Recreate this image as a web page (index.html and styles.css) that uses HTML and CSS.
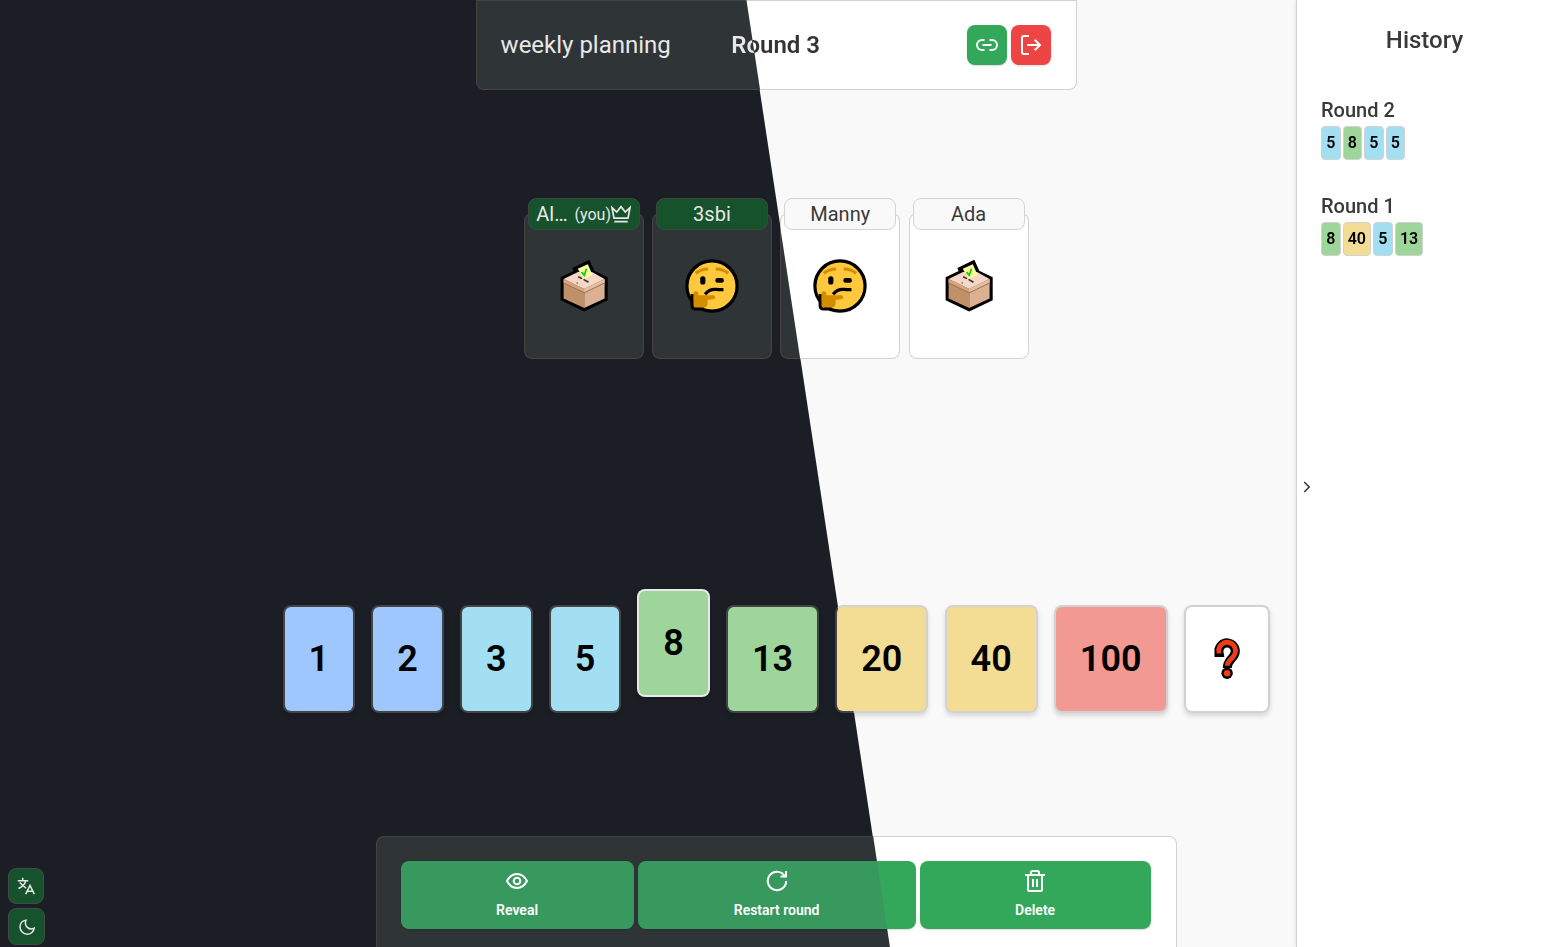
FILE: index.html
```html
<!DOCTYPE html>
<html lang="en">
<head>
<meta charset="utf-8">
<title>weekly planning</title>
<link rel="stylesheet" href="styles.css">
</head>
<body>
<svg class="defs" width="0" height="0">
  <symbol id="box" viewBox="0 0 60 60">
    <path d="M8.3 22.3 21.5 16 20.5 12.8 34.5 6 39 16 52 22.3V43.2L30.2 53.6 8.3 43.2Z" fill="#000" stroke="#000" stroke-width="3.4"/>
    <path d="M9.6 23.3 30.2 33V52L9.6 42.4Z" fill="#bf9169"/>
    <path d="M50.6 23.3 30.2 33V52L50.6 42.4Z" fill="#dbb093"/>
    <path d="M9.6 23 24 16 38 16 50.6 23 30.2 33Z" fill="#f6d6c5"/>
    <path d="M9.6 23 30.2 33V36.2L9.6 26.5Z" fill="#d5a583"/>
    <path d="M50.6 23 30.2 33V36.2L50.6 26.5Z" fill="#e5bda2"/>
    <path d="M9.6 27 30.2 36.8 50.6 27" fill="none" stroke="#a5714f" stroke-width="1"/>
    <path d="M23.8 12.7 33.8 8.3 38.5 19 29.8 23.3Z" fill="#fdff9e"/>
    <path d="M27.5 16 30.2 19.3 32.5 12.7" fill="none" stroke="#12c812" stroke-width="1.7"/>
    <path d="M24.2 20.7 28 22.6M29.500 23.400 34.5 26.3" stroke="#333" stroke-width="1.6"/>
    <circle cx="23.2" cy="27" r=".9" fill="#888"/>
  </symbol>
  <symbol id="think" viewBox="0 0 60 60">
    <circle cx="30" cy="30" r="25.1" fill="#ffc83d" stroke="#000" stroke-width="3.2"/>
    <path d="M10.2 38V49.500Q10.200 53 13.700 53H22" fill="none" stroke="#000" stroke-width="3.2"/>
    <path d="M11.5 37.5C11.5 34.5 16 34.5 16.3 37.5V39.2L31 39.2C34 39.2 34 43.2 31 43.2L25.6 44V47Q25.6 51.6 21 51.6H14Q11.5 51.6 11.5 49Z" fill="#d48c00"/>
    <path d="M13.8 17.3Q18.8 13 26.2 13M33.8 13Q41.2 13 46.2 17.3" fill="none" stroke="#d48c00" stroke-width="3.2"/>
    <rect x="18.2" y="20.2" width="5.2" height="8.4" rx="2.6"/>
    <rect x="33.3" y="22" width="8.6" height="4.8" rx="2.4"/>
    <path d="M23 38.300Q27.5 33 33.5 33.4T41.5 33.6" fill="none" stroke="#000" stroke-width="3.1"/>
  </symbol>
</svg>

<div class="stage">
  <header class="panel top">
    <div class="room">weekly planning</div>
    <div class="round">Round 3</div>
    <div class="actions">
      <button class="square green"><svg class="icon" viewBox="0 0 24 24"><path d="M9.5 7H7a5 5 0 0 0 0 10h2.5M14.5 7H17a5 5 0 0 1 0 10h-2.5M7.5 12h9"/></svg></button>
      <button class="square red"><svg class="icon" viewBox="0 0 24 24"><path d="M10 3H5Q3 3 3 5V19Q3 21 5 21H10M8 12H21M15.7 6.7 21 12 15.7 17.3"/></svg></button>
    </div>
  </header>

  <main class="players">
    <div class="player">
      <div class="name dark"><span>Al…</span><small>(you)</small><svg class="crown" viewBox="0 0 20 20"><path d="M1 3.6 5.7 8 10 2.6 14.3 8 19 3.6 17 14.1H3ZM3.3 17.7H16.7"/></svg></div>
      <div class="seat"><svg class="emoji"><use href="#box"/></svg></div>
    </div>
    <div class="player">
      <div class="name dark">3sbi</div>
      <div class="seat"><svg class="emoji"><use href="#think"/></svg></div>
    </div>
    <div class="player">
      <div class="name">Manny</div>
      <div class="seat"><svg class="emoji"><use href="#think"/></svg></div>
    </div>
    <div class="player">
      <div class="name">Ada</div>
      <div class="seat"><svg class="emoji"><use href="#box"/></svg></div>
    </div>
  </main>

  <section class="deck">
    <button class="card blue">1</button>
    <button class="card blue">2</button>
    <button class="card cyan">3</button>
    <button class="card cyan">5</button>
    <button class="card mint chosen">8</button>
    <button class="card mint">13</button>
    <button class="card sand">20</button>
    <button class="card sand">40</button>
    <button class="card rose">100</button>
    <button class="card plain"><svg class="question" viewBox="0 0 40 44"><path d="M7.500 15.5H12A8.2 8.2 0 1 1 27 18.5C25.5 21.5 20.3 24 20.3 31" fill="none" stroke="#000" stroke-width="9"/><circle cx="20.1" cy="36.300" r="5.7"/><path d="M9.6 14H11.7A8.4 8.4 0 1 1 27 18.5C25.5 21.5 20.3 24 20.3 28.7" fill="none" stroke="#ef3b16" stroke-width="4.8"/><circle cx="20.1" cy="36.300" r="3.3" fill="#ef3b16"/></svg></button>
  </section>

  <footer class="panel bottom">
    <button class="command reveal"><svg class="icon" viewBox="0 0 24 24"><path d="M2 12C4.5 7.3 8 5 12 5S19.5 7.3 22 12C19.5 16.7 16 19 12 19S4.5 16.7 2 12Z"/><circle cx="12" cy="12" r="3.3"/></svg>Reveal</button>
    <button class="command restart"><svg class="icon" viewBox="0 0 24 24"><path d="M21 2V7.5H15.5M20.3 8A9.2 9.2 0 1 0 21.2 12"/></svg>Restart round</button>
    <button class="command delete"><svg class="icon" viewBox="0 0 24 24"><path d="M2 6H22M5 6V20.5Q5 22 6.5 22H17.5Q19 22 19 20.5V6M8 6V3.5Q8 2 9.5 2H14.5Q16 2 16 3.5V6M10 10V18M14 10V18"/></svg>Delete</button>
  </footer>
</div>

<nav class="tools">
  <button class="tool"><svg viewBox="0 0 18 18"><path d="M5.7 .8V3M.8 3.7H11.2M2.7 5.5 9 11.3M8.6 4.5Q7 9 1.5 11.5M8.7 17.2 13 8.5 17.3 17.2M10 14.3H16"/></svg></button>
  <button class="tool large"><svg viewBox="0 0 18 18"><path d="M8 2.2C4.5 2.4 2 5.3 2 9A7.3 7.3 0 0 0 9.2 16.2C12.8 16.2 15.8 13.6 16.2 10.2 11.5 12.8 5.5 8 8 2.2Z"/></svg></button>
</nav>

<aside class="history">
  <svg class="chevron" viewBox="0 0 12 12"><path d="M3.2 1 8.2 6 3.2 11"/></svg>
  <h2>History</h2>
  <section class="past">
    <h3>Round 2</h3>
    <div class="votes"><span class="cyan">5</span><span class="mint">8</span><span class="cyan">5</span><span class="cyan">5</span></div>
  </section>
  <section class="past">
    <h3>Round 1</h3>
    <div class="votes"><span class="mint">8</span><span class="sand">40</span><span class="cyan">5</span><span class="mint">13</span></div>
  </section>
</aside>
</body>
</html>
```

FILE: styles.css
```css
* { box-sizing: border-box; }

/* Every two-tone surface shares one diagonal, fixed to the viewport. */
body, .panel, .round, .seat, .card, .command {
  --fill: linear-gradient(81.384deg, var(--fill-dark) 879px, var(--fill-light) 880px);
  --edge: linear-gradient(81.384deg, #444 879px, #d2d2d2 880px);
}

body {
  --fill-dark: #1b1e25;
  --fill-light: #f9f9f9;
  margin: 0;
  height: 947px;
  overflow: hidden;
  font-family: Roboto, sans-serif;
  color: #393939;
  background: var(--fill) fixed;
}

.defs { position: absolute; }

h2, h3 { margin: 0; font-weight: 500; }

button { font-family: inherit; padding: 0; border: 0; }

.stage {
  width: 1552.2px;
  height: 947px;
  display: flex;
  flex-direction: column;
  align-items: center;
}

.panel {
  --fill-dark: #2f3437;
  --fill-light: #fff;
  border: 1px solid transparent;
  background: var(--fill) fixed, var(--edge) fixed;
  background-clip: padding-box, border-box;
  padding: 24px;
}

.top {
  width: 601px;
  height: 90px;
  padding-right: 25px;
  border-radius: 0 0 8px 8px;
  display: grid;
  grid-template-columns: 1fr auto 1fr;
  align-items: center;
  font-size: 24px;
  line-height: 32px;
}

.room { color: #e8e8e8; white-space: nowrap; }

.round {
  --fill-dark: #e8e8e8;
  --fill-light: #333;
  font-weight: 600;
  color: transparent;
  background: var(--fill) fixed;
  -webkit-background-clip: text;
  background-clip: text;
}

.actions { display: flex; gap: 4px; justify-content: flex-end; }

.square {
  width: 40px;
  height: 40px;
  border-radius: 8px;
  display: grid;
  place-items: center;
  box-shadow: 0 1px 2px rgba(0, 0, 0, .15);
}
.green { background: #34a85a; }
.red { background: #ef4444; }

.icon {
  width: 24px;
  height: 24px;
  fill: none;
  stroke: #fff;
  stroke-width: 2;
}

.players {
  margin-top: 108px;
  display: flex;
  gap: 8.3px;
}

.player {
  width: 120px;
  display: flex;
  flex-direction: column;
  align-items: center;
}

.name {
  z-index: 1;
  width: 112px;
  height: 32px;
  border: 1px solid #d4d4d4;
  border-radius: 8px;
  background: #f9f9f9;
  display: flex;
  align-items: center;
  justify-content: center;
  font-size: 20px;
}
.name.dark { background: #16532d; border-color: #3d4740; color: #e8e8e8; }
.name small { font-size: 16px; margin-left: 7px; }
.crown { width: 20px; height: 20px; fill: none; stroke: #e8e8e8; stroke-width: 1.7; flex: none; }

.seat {
  --fill-dark: #2f3437;
  --fill-light: #fff;
  width: 120px;
  height: 146px;
  margin-top: -17px;
  border: 1px solid transparent;
  border-radius: 8px;
  background: var(--fill) fixed, var(--edge) fixed;
  background-clip: padding-box, border-box;
  display: grid;
  place-items: center;
}
.emoji { width: 60px; height: 60px; }

.deck {
  margin-top: 246px;
  display: flex;
  gap: 16.14px;
}

.card {
  --fill-dark: var(--tone);
  --fill-light: var(--tone);
  height: 108px;
  padding: 0 24px;
  border: 2px solid transparent;
  border-radius: 8px;
  background: var(--fill) fixed, var(--edge) fixed;
  background-clip: padding-box, border-box;
  box-shadow: 0 3px 5px rgba(0, 0, 0, .14);
  color: #000;
  font-size: 36px;
  font-weight: 600;
}
.card.chosen { margin: -16px 0 16px; --edge: linear-gradient(#e8e8e8, #e8e8e8); }
.card.plain { width: 86px; padding: 0; display: grid; place-items: center; }
.question { width: 40px; height: 44px; }

.blue { --tone: #9fc7ff; }
.cyan { --tone: #a3dff2; }
.mint { --tone: #9dd59a; }
.sand { --tone: #f3dd95; }
.rose { --tone: #f39994; }
.plain { --tone: #fff; }

.bottom {
  width: 801px;
  height: 111px;
  margin-top: auto;
  padding-bottom: 18px;
  border-bottom: 0;
  border-radius: 8px 8px 0 0;
  display: flex;
  gap: 4px;
}

.command {
  --fill-dark: #38995e;
  --fill-light: #34a85a;
  height: 68px;
  padding-top: 8px;
  border-radius: 8px;
  background: var(--fill) fixed;
  box-shadow: 0 1px 2px rgba(0, 0, 0, .15);
  display: flex;
  flex-direction: column;
  align-items: center;
  gap: 7px;
  color: #fff;
  font-size: 14px;
  font-weight: 600;
  line-height: 20px;
}
.reveal { width: 233px; }
.restart { width: 278px; }
.delete { width: 231px; }

.tools {
  position: fixed;
  left: 8px;
  bottom: 2px;
  display: flex;
  flex-direction: column;
  gap: 4px;
}
.tool {
  width: 36px;
  height: 36px;
  border: 1px solid #404b43;
  border-radius: 8px;
  background: #16532d;
  display: grid;
  place-items: center;
}
.tool.large { width: 37px; height: 37px; }
.tool svg { width: 18px; height: 18px; fill: none; stroke: #e8e8e8; stroke-width: 1.5; }

.history {
  position: fixed;
  top: 0;
  right: 0;
  width: 258px;
  height: 947px;
  padding: 24px 26px 24px 24px;
  border-left: 1px solid #d2d2d2;
  background: #fff;
  box-shadow: 0 0 5px rgba(0, 0, 0, .12);
}
.history h2 { font-size: 24px; line-height: 32px; text-align: center; margin-bottom: 40px; }
.past { margin-bottom: 32px; }
.past h3 { font-size: 20px; line-height: 28px; margin-bottom: 2px; }
.votes { display: flex; gap: 2px; color: #000; }
.votes span {
  height: 34px;
  padding: 0 4.2px;
  border: 1px solid #d2d2d2;
  border-radius: 4px;
  background: var(--tone);
  font-size: 16px;
  font-weight: 600;
  line-height: 32px;
}
.chevron {
  position: absolute;
  left: 4px;
  top: 481px;
  width: 12px;
  height: 12px;
  fill: none;
  stroke: #333;
  stroke-width: 1.5;
}
```
